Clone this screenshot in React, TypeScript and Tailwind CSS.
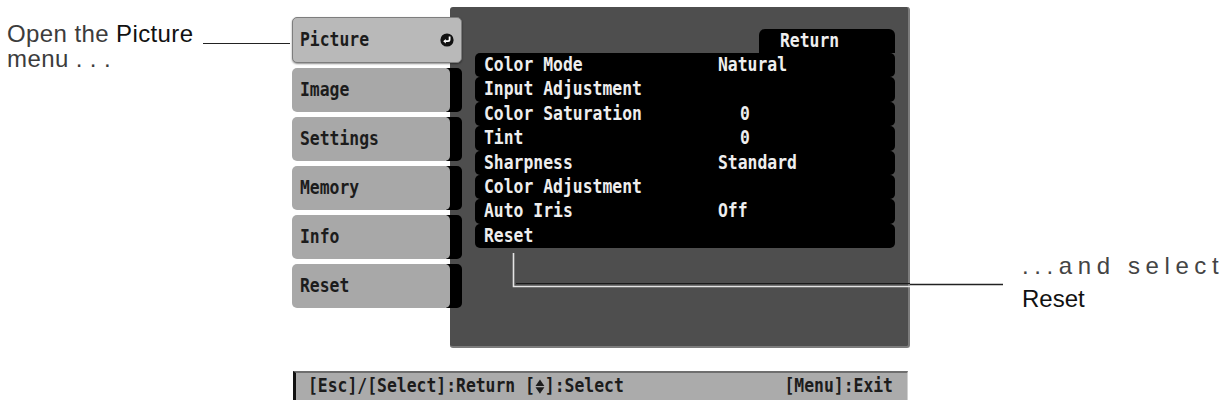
import React from 'react';

const tabs = ['Picture', 'Image', 'Settings', 'Memory', 'Info', 'Reset'];

const rows: [string, string][] = [
  ['Color Mode', 'Natural'],
  ['Input Adjustment', ''],
  ['Color Saturation', '0'],
  ['Tint', '0'],
  ['Sharpness', 'Standard'],
  ['Color Adjustment', ''],
  ['Auto Iris', 'Off'],
  ['Reset', ''],
];

const osd = "font-['DejaVu_Sans_Mono','Liberation_Mono',monospace] font-bold text-[16.4px] leading-none";

const ReturnIcon = () => (
  <svg width="14" height="14" viewBox="0 0 14 14">
    <circle cx="7" cy="7" r="6.6" fill="#111" />
    <path d="M9.6 3.6 V6.6 A1.6 1.6 0 0 1 8 8.2 H5.4" stroke="#fff" strokeWidth="1.8" fill="none" />
    <path d="M3.2 8.2 L5.8 5.9 V10.5 Z" fill="#fff" />
  </svg>
);

const UpDown = () => (
  <span className="inline-flex w-[9.9px] items-center justify-center">
    <svg width="10" height="13" viewBox="0 0 10 13">
      <path d="M5 0.5 L9.5 6 H0.5 Z" fill="#1c1c1c" />
      <path d="M5 12.5 L9.5 7 H0.5 Z" fill="#1c1c1c" />
    </svg>
  </span>
);

export default function App() {
  return (
    <div className="relative flex h-[401px] w-[1229px] overflow-hidden bg-white font-['Liberation_Sans',Arial,sans-serif]">
      {/* Left callout */}
      <div className="w-[292px] shrink-0 pl-[7px] pr-[2px] pt-[21px] text-[24px] leading-[25px] text-[#3c3c3c]">
        <div className="flex items-end">
          <span className="whitespace-nowrap tracking-[0.4px]">
            Open the <span className="text-[#111]">Picture</span>
          </span>
          <div className="mb-[2px] ml-[9px] h-px flex-1 bg-[#222]" />
        </div>
        <div className="tracking-[0.4px]">menu . . .</div>
      </div>

      {/* Projector menu */}
      <div className="flex w-[619px] shrink-0 flex-col pt-[7px]">
        <div className="flex h-[341px]">
          <div className="relative z-10 flex w-[170px] shrink-0 flex-col gap-[5px] pt-[10px]">
            {tabs.map((tab, i) =>
              i === 0 ? (
                <div
                  key={tab}
                  className="flex h-[46px] items-center justify-between rounded-[5px] border border-[#7d7d7d] bg-[#b9b9b9] pl-[7px] pr-[7px] shadow-[0_1px_2px_rgba(0,0,0,0.45)]"
                >
                  <span className={`${osd} inline-block scale-y-[1.2] text-[#1c1c1c]`}>{tab}</span>
                  <ReturnIcon />
                </div>
              ) : (
                <div key={tab} className="flex h-[44px]">
                  <div className="relative z-[1] flex w-[158px] items-center rounded-[5px] bg-[#a8a8a8] pl-[8px]">
                    <span className={`${osd} inline-block scale-y-[1.2] text-[#1c1c1c]`}>{tab}</span>
                  </div>
                  <div className="-ml-[4px] w-[16px] rounded-r-[5px] bg-black" />
                </div>
              )
            )}
          </div>

          <div className="-ml-[12px] flex w-[460px] shrink-0 flex-col rounded-[3px] border-b-2 border-r-2 border-[#7c7c7c] bg-[#4e4e4e] pl-[25px] pr-[13px] pt-[22px]">
            <div className="flex h-[24px] w-[136px] items-center self-end rounded-t-[6px] bg-black pl-[21px]">
              <span className={`${osd} inline-block scale-y-[1.2] text-[#eeeeee]`}>Return</span>
            </div>
            <div className="flex flex-col">
              {rows.map(([label, value]) => (
                <div key={label} className="flex h-[24.4px] items-center rounded-[5px] bg-black pl-[9px]">
                  <span className={`${osd} inline-block w-[234px] scale-y-[1.2] whitespace-pre text-[#eeeeee]`}>
                    {label}
                  </span>
                  <span
                    className={`${osd} inline-block scale-y-[1.2] whitespace-pre text-[#eeeeee] ${value === '0' ? 'ml-[22px]' : ''}`}
                  >
                    {value}
                  </span>
                </div>
              ))}
            </div>
          </div>
        </div>

        <div className="ml-[1px] mt-[23px] flex h-[29px] w-[615px] items-center justify-between border-l-[3px] border-r border-t-2 border-l-[#111] border-r-[#d0d0d0] border-t-[#6e6e6e] bg-[#ababab] pl-[12px] pr-[14px]">
          <span className={`${osd} flex scale-y-[1.2] items-center whitespace-pre text-[#1c1c1c]`}>
            [Esc]/[Select]:Return [<UpDown />]:Select
          </span>
          <span className={`${osd} inline-block scale-y-[1.2] whitespace-pre text-[#1c1c1c]`}>[Menu]:Exit</span>
        </div>
      </div>

      {/* Right callout */}
      <div className="flex-1 pl-[111px] pt-[249px] text-[24px] leading-[33px]">
        <div className="whitespace-nowrap tracking-[5.6px] text-[#444]">...and select</div>
        <div className="text-[#111]">Reset</div>
      </div>

      <svg className="pointer-events-none absolute left-0 top-0" width="1229" height="401">
        <line x1="516" y1="283.5" x2="910" y2="283.5" stroke="#1a1a1a" strokeWidth="1.2" />
        <path d="M513.5 253 V286.5 H910" stroke="#e4e4e4" strokeWidth="1.6" fill="none" />
        <line x1="910" y1="284.5" x2="1003" y2="284.5" stroke="#222" strokeWidth="1.3" />
      </svg>
    </div>
  );
}
